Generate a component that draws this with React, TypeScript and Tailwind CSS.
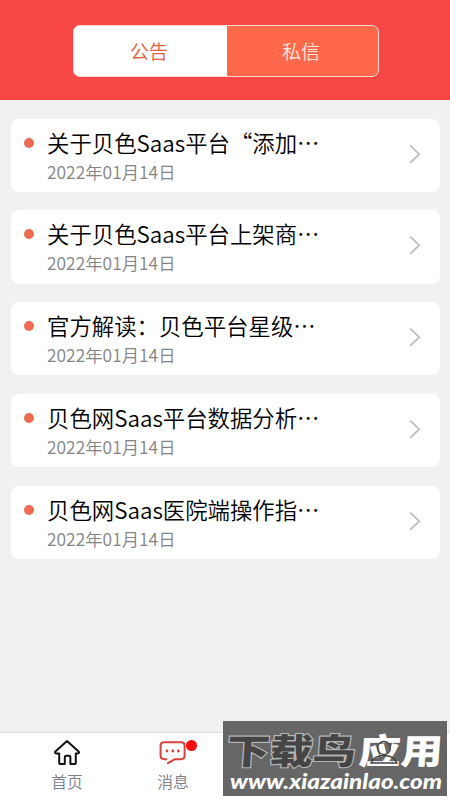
import React, { useState } from 'react';

interface Notice {
  id: number;
  title: string;
  date: string;
}

const notices: Notice[] = [
  { id: 1, title: '关于贝色Saas平台“添加⋯', date: '2022年01月14日' },
  { id: 2, title: '关于贝色Saas平台上架商⋯', date: '2022年01月14日' },
  { id: 3, title: '官方解读：贝色平台星级⋯', date: '2022年01月14日' },
  { id: 4, title: '贝色网Saas平台数据分析⋯', date: '2022年01月14日' },
  { id: 5, title: '贝色网Saas医院端操作指⋯', date: '2022年01月14日' },
];

const HomeIcon: React.FC = () => (
  <svg width="28" height="28" viewBox="0 0 28 28" fill="none" stroke="#111" strokeWidth="2" strokeLinejoin="round">
    <path d="M14 2 L25.6 12.4 Q26.8 14.4 24.6 14.4 H22.8 V23.4 Q22.8 25 21.2 25 H17.4 V18.4 Q17.4 16.8 16 16.8 H13.2 Q11.8 16.8 11.8 18.4 V25 H7.8 Q6.2 25 6.2 23.4 V14.4 H3.4 Q1.2 14.4 2.4 12.4 Z" />
  </svg>
);

const MessageIcon: React.FC = () => (
  <svg width="28" height="28" viewBox="0 0 28 28" fill="none" stroke="#d8403c" strokeWidth="2" strokeLinecap="round" strokeLinejoin="round">
    <path d="M7.4 20.2 H5.4 Q1.6 20.2 1.6 16.6 V6.6 Q1.6 3.2 5.4 3.2 H22.2 Q25.6 3.2 25.6 6.6 V16.6 Q25.6 20.2 22.2 20.2 H16 L9 24.2" />
    <path d="M8 12 H8.02 M13.8 12 H13.82 M19.4 12 H19.42" strokeWidth="2.8" />
  </svg>
);

const NoticeCard: React.FC<{ notice: Notice }> = ({ notice }) => (
  <li className="flex h-[73.4px] items-start rounded-lg bg-white pl-[12.5px] pr-[19px]">
    <span className="mt-[19px] h-2.5 w-2.5 shrink-0 rounded-full bg-[#ee6a50]" />
    <div className="ml-[13.5px] flex-1 whitespace-nowrap">
      <h3 className="mt-[7px] text-[22.4px] leading-8 text-black">{notice.title}</h3>
      <p className="mt-0.5 text-[17.4px] leading-6 text-[#848484]">{notice.date}</p>
    </div>
    <svg className="mt-[25px]" width="12" height="20" viewBox="0 0 12 20" fill="none" stroke="#bdbdbd" strokeWidth="1.8">
      <path d="M1.2 1.6 L10.2 10.2 L1.2 18.8" />
    </svg>
  </li>
);

const Watermark: React.FC = () => (
  <div className="absolute left-[223px] top-[721px] h-[75px] w-[224px] bg-[#666]">
    <svg width="224" height="75" viewBox="0 0 224 75" fontFamily='"Noto Sans CJK SC", sans-serif' fontWeight="900">
      <g transform="translate(3 43) skewX(-4) scale(1.23 1)">
        <text x="0" y="0" fontSize="35" fill="#454545" stroke="#b5b5b5" strokeWidth="2.2" paintOrder="stroke">下载鸟</text>
      </g>
      <g transform="translate(135 43) skewX(-4) scale(1.2 1)">
        <text x="0" y="0" fontSize="35" fill="#fff">应用</text>
      </g>
      <g fill="none" stroke="#444" strokeWidth="1.3">
        <circle cx="161" cy="27" r="6.5" />
        <path d="M148 42 Q151 34.5 161 34.5 Q171 34.5 174 42 Z" />
      </g>
      <text x="7" y="68" fontSize="20" fontFamily='Lato, sans-serif' fontWeight="900" fontStyle="italic" textLength="212" lengthAdjust="spacingAndGlyphs" fill="#fff">www.xiazainlao.com</text>
    </svg>
  </div>
);

const App: React.FC = () => {
  const [tab, setTab] = useState<'notice' | 'private'>('notice');

  const tabClass = (active: boolean) =>
    active ? 'bg-white text-[#e0603f]' : 'bg-[#ff694a] text-[#ffeadf]';

  return (
    <div className="relative flex h-[800px] w-[450px] flex-col overflow-hidden bg-[#f1f1f1] font-['Noto_Sans_CJK_SC',sans-serif] font-[350]">
      <header className="flex h-[100px] shrink-0 justify-center bg-[#f74845] pl-px pt-[25px]">
        <div className="flex h-[52px] w-[306px] overflow-hidden rounded-[7px] border-[1.5px] border-[#ffd9cf] bg-white text-[19px]">
          <button className={`w-[153px] pr-0.5 ${tabClass(tab === 'notice')}`} onClick={() => setTab('notice')}>公告</button>
          <button className={`flex-1 pr-0.5 ${tabClass(tab === 'private')}`} onClick={() => setTab('private')}>私信</button>
        </div>
      </header>

      <ul className="flex flex-1 flex-col gap-[18.4px] pl-[11px] pr-2.5 pt-[18.5px]">
        {notices.map((notice) => (
          <NoticeCard key={notice.id} notice={notice} />
        ))}
      </ul>

      <nav className="flex h-[68px] shrink-0 border-t border-[#dedede] bg-white pl-3.5 text-[15.8px] text-[#7d7d85]">
        <button className="flex w-[106px] flex-col items-center pt-1.5">
          <HomeIcon />
          <span className="mt-[3px] leading-6">首页</span>
        </button>
        <button className="relative flex w-[106px] flex-col items-center pt-1.5">
          <MessageIcon />
          <span className="absolute left-[66px] top-[7px] h-[11px] w-[11px] rounded-full bg-[#f80d0d]" />
          <span className="mt-[3px] leading-6">消息</span>
        </button>
      </nav>

      <Watermark />
    </div>
  );
};

export default App;
